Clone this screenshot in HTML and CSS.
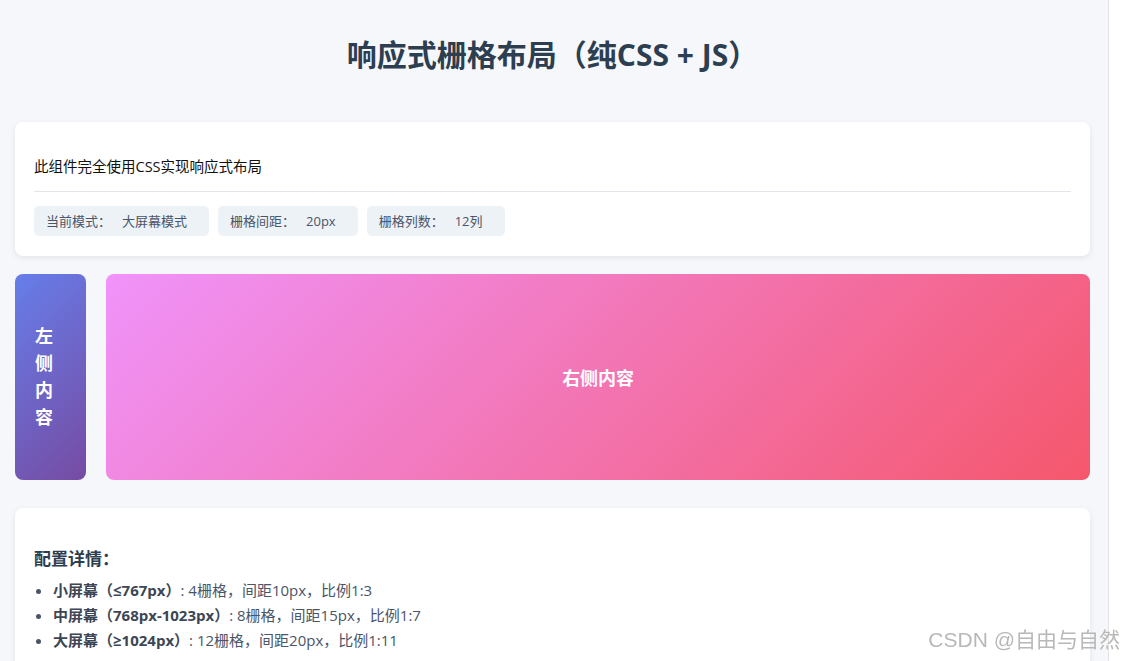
FILE: index.html
```html
<!DOCTYPE html>
<html lang="zh-CN">
<head>
    <meta charset="UTF-8">
    <title>响应式栅格布局</title>
    <link rel="stylesheet" href="styles.css">
</head>
<body>
    <div class="page">
        <h1>响应式栅格布局（纯CSS + JS）</h1>

        <div class="card info-card">
            <p class="intro">此组件完全使用CSS实现响应式布局</p>
            <div class="badges">
                <div class="badge"><span class="label">当前模式：</span><span>大屏幕模式</span></div>
                <div class="badge"><span class="label">栅格间距：</span><span>20px</span></div>
                <div class="badge"><span class="label">栅格列数：</span><span>12列</span></div>
            </div>
        </div>

        <div class="grid">
            <div class="cell left">左侧内容</div>
            <div class="cell right">右侧内容</div>
        </div>

        <div class="card details">
            <h3>配置详情：</h3>
            <ul>
                <li><b>小屏幕（≤767px）</b>: 4栅格，间距10px，比例1:3</li>
                <li><b>中屏幕（768px-1023px）</b>: 8栅格，间距15px，比例1:7</li>
                <li><b>大屏幕（≥1024px）</b>: 12栅格，间距20px，比例1:11</li>
            </ul>
        </div>
    </div>
    <div class="scrollbar"></div>

    <div class="watermark">CSDN @自由与自然</div>
</body>
</html>
```

FILE: styles.css
```css
html, body {
    margin: 0;
    height: 100%;
    overflow: hidden;
}
body {
    display: flex;
    background: #f5f7fa;
    font-family: "Open Sans", "Noto Sans CJK SC", sans-serif;
}
.page {
    flex: 1;
    padding: 15px 18px 0 15px;
}
.scrollbar {
    width: 15px;
    flex-shrink: 0;
    background: #fff;
    border-left: 1px solid #e3e3e3;
}
h1 {
    margin: 20px 0 47px;
    text-align: center;
    font-size: 30px;
    line-height: 40px;
    color: #2c3e50;
    font-weight: bold;
}
.card {
    background: white;
    border-radius: 8px;
    box-shadow: 0 2px 6px rgba(0, 0, 0, 0.08);
    padding: 20px 19px;
}
.intro {
    margin: 15px 0 14px;
    padding-bottom: 14px;
    border-bottom: 1px solid #e2e6ea;
    font-size: 14.5px;
    line-height: 20px;
    color: #111;
}
.badges {
    display: flex;
    gap: 9px;
}
.badge {
    background: #edf2f7;
    border-radius: 5px;
    height: 30px;
    line-height: 30px;
    padding: 0 22px 0 12px;
    font-size: 13px;
    color: #4a5568;
}
.badge .label {
    margin-right: 11px;
}
.grid {
    display: grid;
    grid-template-columns: repeat(12, 1fr);
    gap: 20px;
    margin: 18px 0 28px;
    height: 206px;
}
.cell {
    border-radius: 8px;
    color: white;
    font-weight: bold;
    font-size: 18px;
    display: flex;
    align-items: center;
    justify-content: center;
    text-align: center;
}
.left {
    grid-column: span 1;
    justify-content: flex-start;
    padding: 0 20px;
    line-height: 27px;
    text-align: left;
    background: linear-gradient(135deg, #667eea, #764ba2);
}
.right {
    grid-column: span 11;
    background: linear-gradient(135deg, #f093fb, #f5576c);
}
.details h3 {
    margin: 21px 0 9px;
    font-size: 17px;
    line-height: 20px;
    color: #2c3e50;
}
.details ul {
    margin: 0;
    padding-left: 19px;
    font-size: 15px;
    line-height: 25px;
    color: #4a5568;
}
.details b {
    color: #3d4654;
}
.watermark {
    position: fixed;
    right: 4px;
    bottom: 8px;
    font-family: "Liberation Sans", "Noto Sans CJK SC", sans-serif;
    font-size: 21px;
    color: rgba(160, 160, 160, 0.75);
    text-shadow: 0 0 1px rgba(255, 255, 255, 0.9);
}
```
